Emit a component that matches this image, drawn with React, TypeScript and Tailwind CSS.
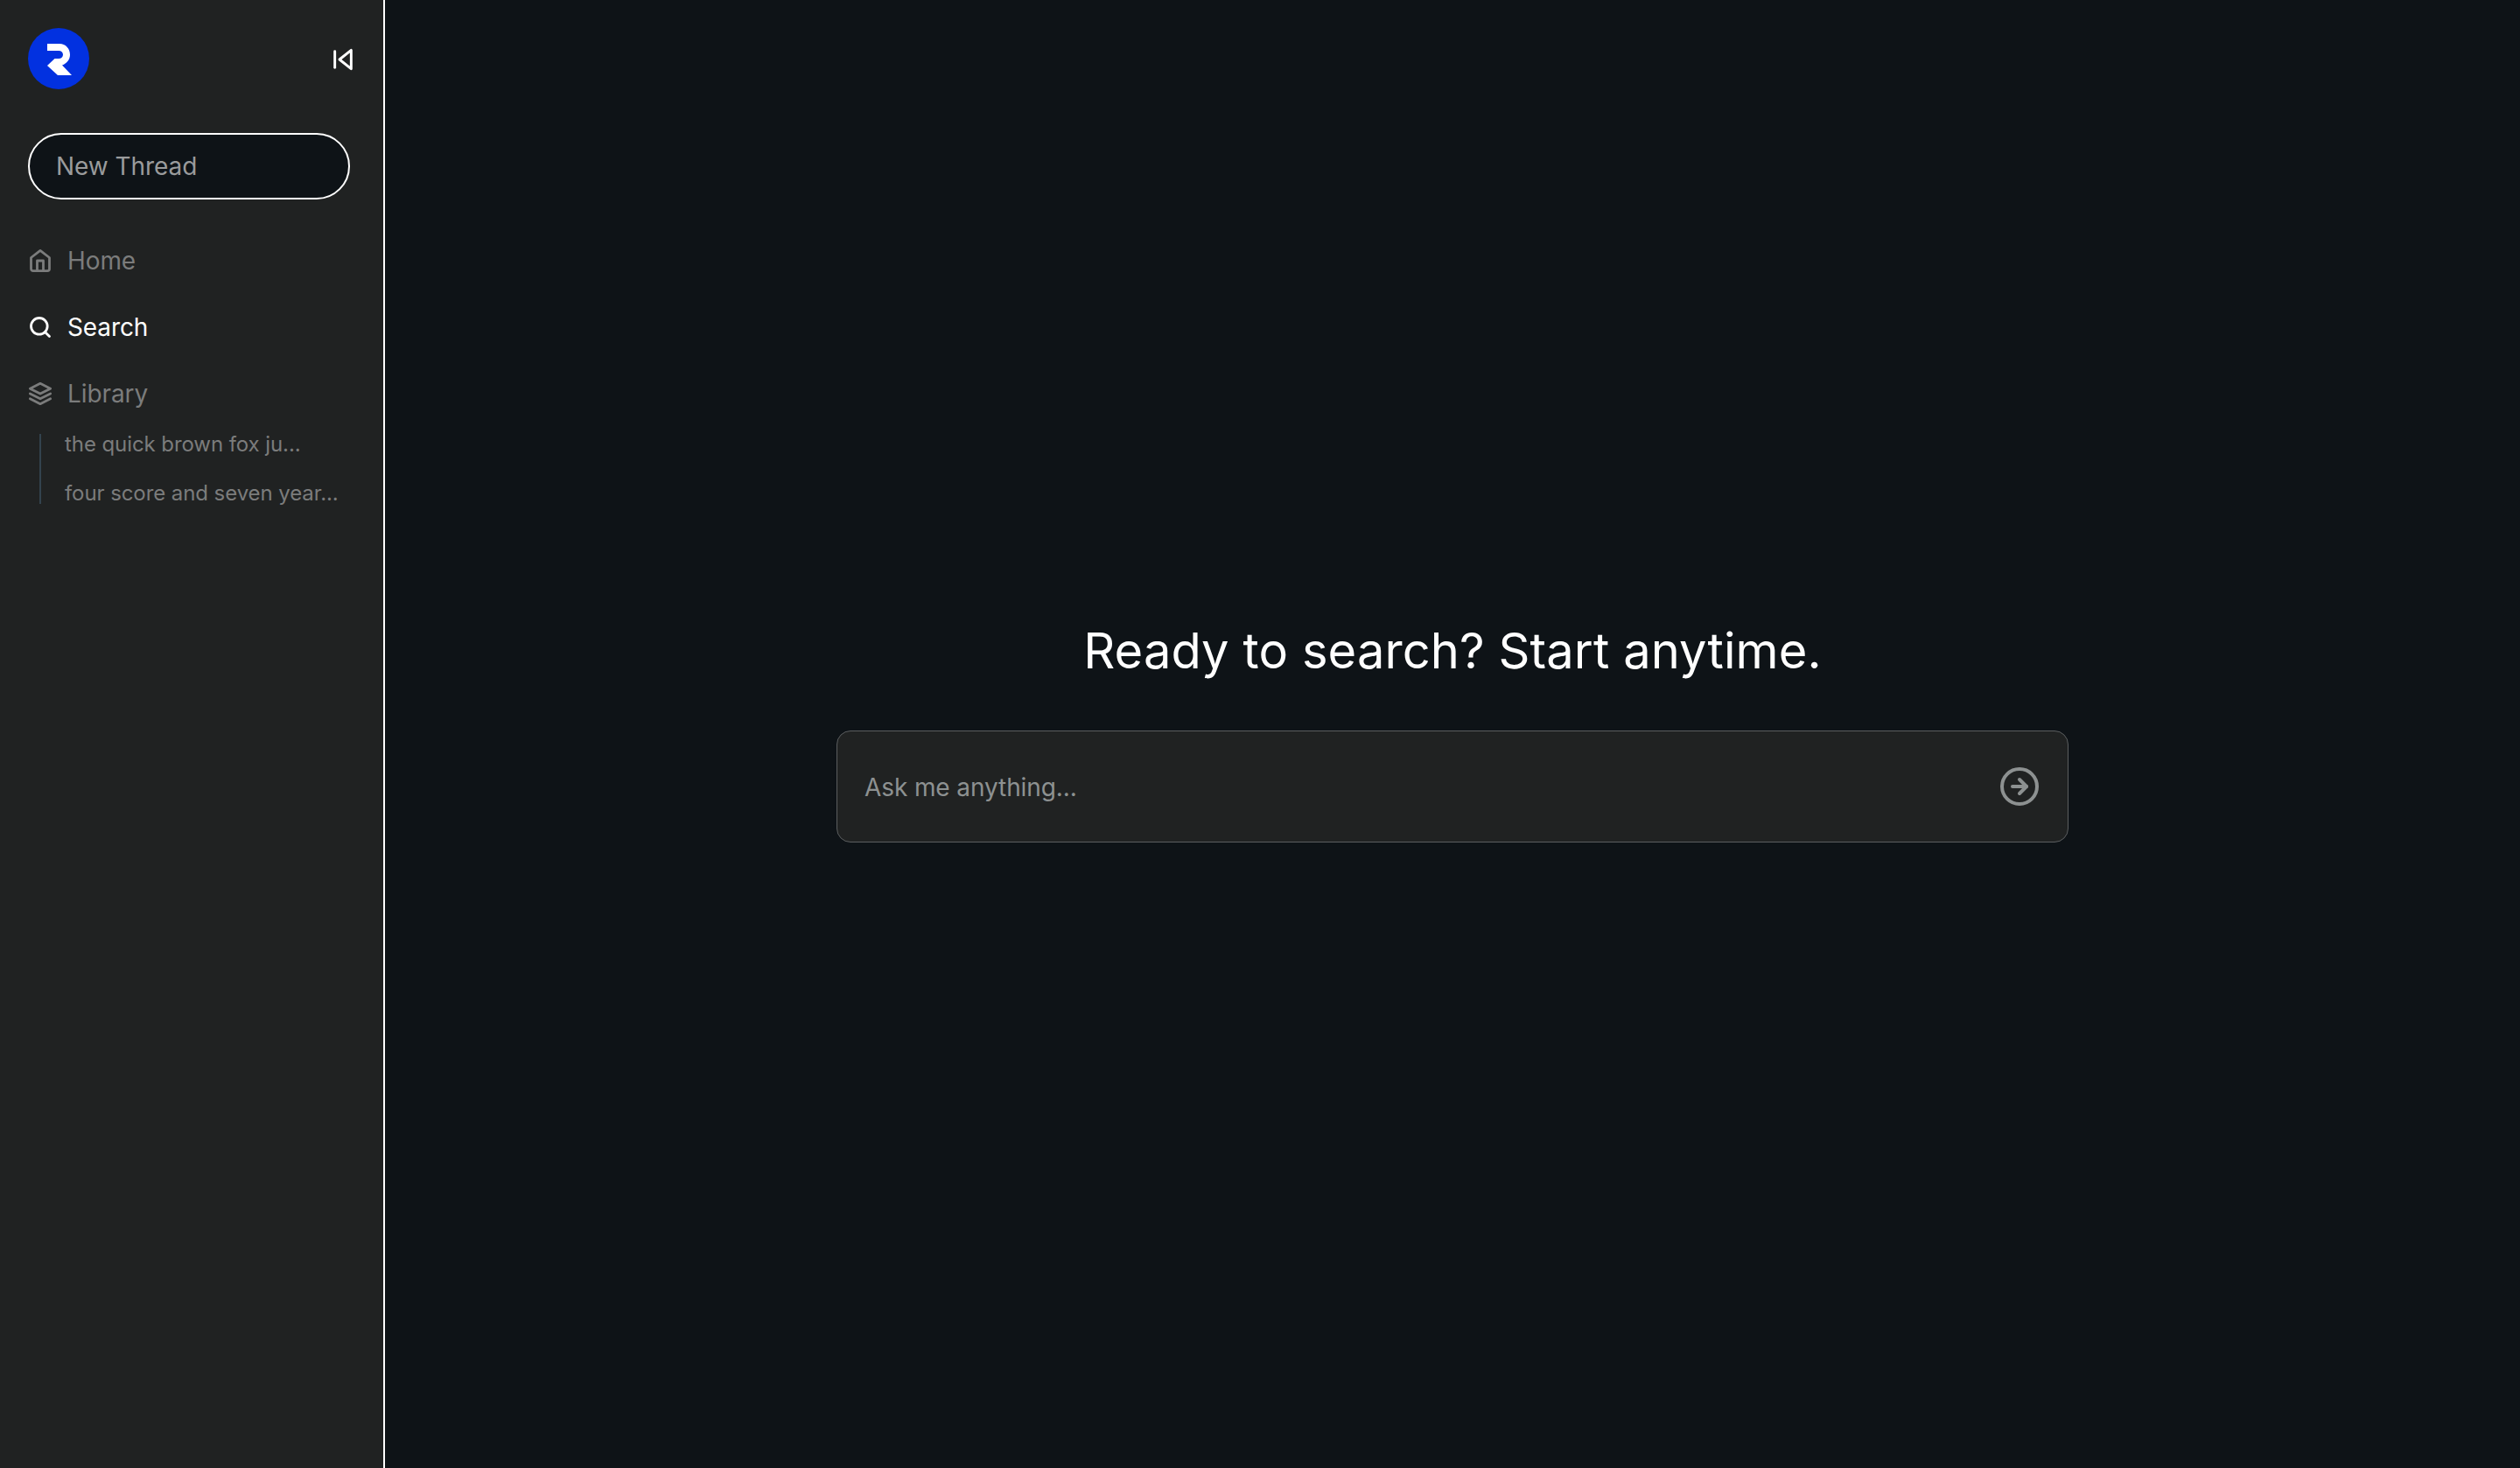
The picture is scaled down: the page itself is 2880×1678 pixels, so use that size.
import { FiArrowRightCircle, FiHome, FiLayers, FiSearch, FiSkipBack } from 'react-icons/fi';
import type { IconType } from 'react-icons';

interface NavItemProps {
    icon: IconType;
    label: string;
    active?: boolean;
}

const threads = ['the quick brown fox ju...', 'four score and seven year...'];

const Logo = () => (
    <svg xmlns="http://www.w3.org/2000/svg" className="w-[70px] h-[70px]" viewBox="0 0 70 70">
        <circle cx="35" cy="35" r="35" fill="#0231e0" />
        <path fill="#fff" d="M22 18h14c7 0 12 5.500 12 12.500c0 5.500-3.500 10-9 12L50 54H34L22 43L30.500 35H35c3 0 5-1.800 5-4.500S38 26 35 26H22z" />
    </svg>
);

const NavItem = ({ icon: Icon, label, active = false }: NavItemProps) => (
    <a href="#" className={`flex items-center gap-[17px] h-7 ${active ? 'text-white' : 'text-[#7b7c7c]'}`}>
        <Icon size={28} strokeWidth={2.4} />
        <span className="text-[28px] leading-7 tracking-[-0.1px]">{label}</span>
    </a>
);

const Sidebar = () => (
    <aside className="flex flex-col w-[440px] shrink-0 bg-[#202222] border-r-2 border-white p-8 pr-[38px]">
        <div className="flex justify-between items-center h-[70px]">
            <Logo />
            <button className="text-white -mr-2 pt-0.5">
                <FiSkipBack size={32} strokeWidth={2.2} />
            </button>
        </div>

        <button className="mt-[50px] h-[76px] w-[368px] shrink-0 rounded-full border-2 border-white bg-[#0e1317] px-[30px] text-left text-[28px] tracking-[-0.05px] text-[#9a9b9c]">
            New Thread
        </button>

        <nav className="flex flex-col gap-12 mt-14">
            <NavItem icon={FiHome} label="Home" />
            <NavItem icon={FiSearch} label="Search" active />
            <NavItem icon={FiLayers} label="Library" />
        </nav>

        <div className="flex mt-8 ml-[13px]">
            <div className="w-0.5 h-20 bg-[#33434e]" />
            <ul className="flex flex-col gap-8 ml-[27px] text-2xl leading-6 tracking-[-0.08px] text-[#7b7c7c] whitespace-nowrap">
                {threads.map((thread) => (
                    <li key={thread}>{thread}</li>
                ))}
            </ul>
        </div>
    </aside>
);

const SearchBox = () => (
    <div className="flex items-center justify-between w-[1408px] h-32 rounded-2xl border border-[#5b5e60] bg-[#202222] pl-[31px] pr-[31px]">
        <span className="pt-0.5 text-[28px] tracking-[-0.1px] text-[#8d9191]">Ask me anything...</span>
        <button className="text-[#8d9191]">
            <FiArrowRightCircle size={48} />
        </button>
    </div>
);

export default function App() {
    return (
        <div className="flex h-screen bg-[#0e1317] font-['Inter',sans-serif] font-[370]">
            <Sidebar />
            <main className="flex flex-col flex-1 items-center pt-[712px]">
                <h1 className="mb-[59px] text-[56px] leading-16 font-[385] tracking-[0.1px] text-white">Ready to search? Start anytime.</h1>
                <SearchBox />
            </main>
        </div>
    );
}
